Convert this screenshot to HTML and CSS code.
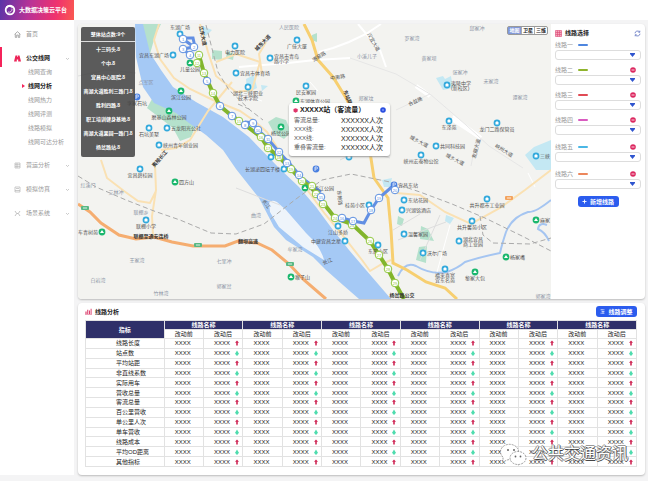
FILE: index.html
```html
<!DOCTYPE html>
<html lang="zh-CN">
<head>
<meta charset="utf-8">
<meta name="viewport" content="width=device-width, initial-scale=1">
<title>大数据决策云平台</title>
<link rel="stylesheet" href="styles.css">
</head>
<body>
<header class="topbar">
  <div class="brand">
    <svg class="brand-logo" viewBox="0 0 12 12" aria-hidden="true"><circle cx="6" cy="6" r="4.3" fill="none" stroke="#fff" stroke-width="1.8"/><path d="M2 2.5C4.500 .5 8 1 9.500 3.500L8 4C6.500 2.500 4 2.500 3 5Z" fill="#fff"/><path d="M8 4.500A3 3 0 0 1 4 8" fill="none" stroke="#fff" stroke-width=".7"/></svg>
    <span>大数据决策云平台</span>
  </div>
</header>
<div class="layout">
  <nav class="sidebar" aria-label="主导航">
    <a class="nav-item" href="#"><svg class="nav-icon" viewBox="0 0 7 7"><path d="M.6 3.300 3.500.7 6.400 3.300M1.300 3V6.400H2.700V4H4.300V6.400H5.700V3" fill="none" stroke="#999" stroke-width=".8"/></svg><span class="nav-text">首页</span></a>
    <a class="nav-item open" href="#"><svg class="nav-icon" viewBox="0 0 7 7"><path d="M1.500.5H3.200V2H3.800V.5H5.500L7 6.500H4.200V4.500H2.800V6.500H0Z" fill="#ed2458"/></svg><span class="nav-text">公交线网</span><svg class="chevron" viewBox="0 0 5 5"><path d="M1 2 2.500 3.500 4 2" /></svg></a>
    <div class="subnav">
      <a href="#">线网查询</a>
      <a class="current" href="#">线网分析</a>
      <a href="#">线网热力</a>
      <a href="#">线网评测</a>
      <a href="#">线路模拟</a>
      <a href="#">线网可达分析</a>
    </div>
    <a class="nav-item" href="#"><svg class="nav-icon" viewBox="0 0 7 7"><path d="M1 1H6V6H1ZM1 2.700H6M1 4.400H6M3 1V6" fill="none" stroke="#aaa" stroke-width=".6"/></svg><span class="nav-text">营运分析</span><svg class="chevron" viewBox="0 0 5 5"><path d="M1 2 2.500 3.500 4 2"/></svg></a>
    <a class="nav-item" href="#"><svg class="nav-icon" viewBox="0 0 7 7"><path d="M1 1H6V6H1ZM1 4.500H6M2 2.500H5" fill="none" stroke="#aaa" stroke-width=".6"/></svg><span class="nav-text">模拟仿真</span><svg class="chevron" viewBox="0 0 5 5"><path d="M1 2 2.500 3.500 4 2"/></svg></a>
    <a class="nav-item" href="#"><svg class="nav-icon" viewBox="0 0 7 7"><path d="M1 1 2.700 3.500 1 6M6 1 4.300 3.500 6 6M2.700 3.500H4.300" fill="none" stroke="#aaa" stroke-width=".7"/></svg><span class="nav-text">场景系统</span><svg class="chevron" viewBox="0 0 5 5"><path d="M1 2 2.500 3.500 4 2"/></svg></a>
  </nav>
  <main class="content">
    <section class="card workspace">
      <div class="map">
        <svg class="map-canvas" id="map" viewBox="78 24 473 275" preserveAspectRatio="xMidYMid slice" role="img" aria-label="线路地图">
          <rect x="78" y="24" width="473" height="275" fill="#f3f3f0"/>
          <g fill="#b5e1cc">
            <path d="M143 24H161L155 36 150 54 143 40Z"/>
            <path d="M152 99 182 114 196 125 191 137 180 141 173 128 147 108Z"/>
            <path d="M268 122 276 117 286 120 291 132 284 139 274 133Z"/>
            <path d="M212 50 222 51 222 60 212 59ZM227 51 234 54 233 60 226 58ZM312 35 317 33V42L311 40ZM398 216 404 219 402 226 397 224ZM421 226 428 229 434 241 420 239ZM419 247 427 246 426 263 416 260Z"/>
          </g>
          <g fill="#c4e8f3">
            <path d="M436 78 443 76 445 79 451 76 453 88 443 90ZM525 155 534 147 551 140V170H536ZM446 215 454 218 450 224 445 221ZM202 26 212 30 205 37 200 33ZM246 79 254 75 257 88 247 93ZM382 180 392 178 390 187 384 187ZM261 85 268 86 262 91ZM142 78 145 76 147 82 143 85Z"/>
          </g>
          <path d="M135 24H143L150 53 161 70 173 87 196 102 223 117 249 137 279 168 299 187 316 207 333 230 349 250 366 270 391 299H359L343 285 326 270 313 257 286 240 274 227 259 198 236 169 223 150 206 135 189 123 176 113 154 103 143 87 136 57Z" fill="#a5c9f5"/>
          <path d="M269 203Q271 199 277 202L286 210 306 233Q321 247 324 260L303 247 279 227 270 212Z" fill="#eef4fa"/>
          <path d="M398 276Q405 261 416 266 431 275 447 272 458 268 465 262 480 257 500 253 502 244 506 232 512 217 528 212 535 213 551 200M547 225Q539 222 538 229 545 232 549 241" fill="none" stroke="#a5c5f1" stroke-width="2"/>
          <g fill="none" stroke="#fff" stroke-width="2">
            <path d="M358 24 368 36 380 50 386 67M319 52 333 48 349 42 366 34 381 24M239 67 288 63 315 60 350 58M453 116 472 130 480 136"/>
            <path d="M452 119 481 138M416 86 430 96" stroke-width="4"/>
            <path d="M528 173 535 187M450 225 445 243 437 272M236 92 262 101M310 82 318 91" stroke-width="1"/>
          </g>
          <g fill="none" stroke="#e6e6e6" stroke-width="1">
            <path d="M396 74 430 94 466 125 489 146 523 168M396 110 430 94M476 140 471 166M350 58 396 74"/>
          </g>
          <g fill="none" stroke="#fae1b3" stroke-width="2">
            <path d="M159 24 154 40 160 59 174 78 190 89 213 100 240 111 253 120 267 132 280 152 295 174 308 191 325 214 340 232 362 260 370 271 382 264 391 260M161 150 176 148 190 140 208 111 218 99 232 82M200 24 208 52 216 76 236 92 252 90 260 62 236 54 216 62M266 42 259 54 262 74M155 165 156 190 152 216 153 236M101 160 107 178 124 191 138 201 150 203 156 191M396 193 420 195 445 212 471 224 500 208 525 190 551 170"/>
          </g>
          <path d="M304 24 312 40 318 60 333 77 346 98 360 125 370 152 374 178 388 198 391 230 393 263 407 270 426 282 445 288 457 299" fill="none" stroke="#f7cf70" stroke-width="3"/>
          <path d="M78 204 90 212 101 223 119 235 136 239 154 237 172 242 193 246 225 246 238 241 257 243 272 250 289 264 304 280 326 299" fill="none" stroke="#f5ad70" stroke-width="3"/>
          <g fill="none" stroke="#aaa" stroke-width="1" stroke-dasharray="5 3">
            <path d="M78 176 96 187 126 200 154 211 180 220 211 233 236 234 264 224 296 199 322 180 351 174 390 182 420 192 452 204 485 218 522 236 551 251M480 216 483 235 493 243 530 244 551 238M206 25 218 72 229 90 250 110 263 120M238 104 251 110"/>
          </g>
          <g fill="none" stroke="#ddd" stroke-width="1"><path d="M78 76 106 70 136 73M236 188 280 205M340 160 360 150 390 158M393 230 420 214M398 240 446 222M420 260 440 215"/></g>
          <path d="M245 122 253 123 258 130 268 139 279 152 290 164 302 178 321 192M183 39 194 47 183 49 190 55M184 38H193L195 47M342 218 353 221 364 223 371 210 379 198 394 185" fill="none" stroke="#628fe3" stroke-width="3"/>
          <path d="M199 55 204 73 213 93 220 106 232 116 245 125 261 137 268 148 279 157 291 169 302 181 312 188 321 200 335 218 352 224 370 241 379 255 388 269 395 283 404 299" fill="none" stroke="#82b52c" stroke-width="4"/>
        </svg>
        <aside class="stations" aria-label="站点列表">
          <h2>整体站点数:9个</h2>
          <ul><li>十三码头.8</li><li>个中.8</li><li>宜昌中心医院.8</li><li>南湖大道胜利三路门.8</li><li>胜利四路.8</li><li>职工培训健身基地.8</li><li>南湖大道果园一路门.8</li><li>杨岔路站.8</li></ul>
        </aside>
        <div class="map-modes"><button class="on" type="button">地图</button><button type="button">卫星</button><button type="button">三维</button></div>
        <div class="tooltip">
          <div class="tooltip-head"><svg class="pin" viewBox="0 0 5 5"><path d="M.5 1 2.500.3 4.700 1V3.500L2.500 4.800.5 3.500Z" fill="#e0356b"/></svg><strong>XXXXX站（客流量）</strong><button class="tooltip-close" type="button" aria-label="关闭"><svg viewBox="0 0 6 6"><circle cx="3" cy="3" r="2.800" fill="#2b50e0"/><path d="M2 2 4 4M4 2 2 4" stroke="#8fa5ff" stroke-width=".6"/></svg></button></div>
          <dl><dt>客流总量:</dt><dd>XXXXXX人次</dd><dt>XXX线:</dt><dd>XXXXXX人次</dd><dt>XXX线:</dt><dd>XXXXXX人次</dd><dt>重叠客流量:</dt><dd>XXXXXX人次</dd></dl>
        </div>
      </div>
      <form class="picker">
        <div class="picker-head"><svg class="head-icon" viewBox="0 0 7 7"><path d="M.5.5H6.500V6.500H.5ZM2.500.5V6.500M4.500.5V6.500M.5 2.500H6.500M.5 4.500H6.500" fill="#f6a8bd" stroke="#dc4a75" stroke-width=".6"/></svg><h2>线路选择</h2><button class="refresh" type="button" aria-label="刷新"><svg viewBox="0 0 7 7"><path d="M1 3.300A2.500 2.500 0 0 1 5.500 2M6 3.700A2.500 2.500 0 0 1 1.500 5M5.800.7V2.200H4.300M1.200 6.300V4.800H2.700" fill="none" stroke="#4a62b8" stroke-width=".7"/></svg></button></div>
        <div id="lines"></div>
        <button class="primary add" type="button"><svg viewBox="0 0 5 5"><path d="M2.500.5V4.500M.5 2.500H4.500" stroke="#fff" stroke-width=".9"/></svg>新增线路</button>
      </form>
    </section>
    <section class="card analysis">
      <div class="analysis-head"><svg class="head-icon" viewBox="0 0 7 7"><path d="M.4 3.500H1.600V6H.4ZM2.200 1.800H3.300V6H2.200ZM4 2.600H5V6H4ZM5.600.8H6.600V6H5.600ZM0 6.300H7V6.800H0Z" fill="#dc4370"/></svg><h2>线路分析</h2><button class="primary" type="button"><svg viewBox="0 0 5 5"><path d="M.5.8H4.500M1.500 2.500H4.500M.5 4.200H4.500M2 .3V1.300M3 2V4.700" stroke="#fff" stroke-width=".6"/></svg>线路调整</button></div>
      <table><thead id="thead"></thead><tbody id="tbody"></tbody></table>
    </section>
  </main>
</div>
<div class="watermark">
  <svg viewBox="0 0 28 24" aria-hidden="true"><g fill="#fff" stroke="#777" stroke-width=".7" stroke-dasharray="2 1"><path d="M3 15A9 7.500 0 1 1 12 17L7 18 3 20Z"/><ellipse cx="18" cy="16" rx="8" ry="6.500"/></g><g fill="#666"><circle cx="8" cy="8" r="1"/><circle cx="14" cy="8" r="1"/><circle cx="15.500" cy="14.500" r=".9"/><circle cx="20.500" cy="14.500" r=".9"/></g></svg>
  <span>公共交通资讯</span>
</div>
<script src="app.js"></script>
</body>
</html>
```
FILE: styles.css
```css
* { box-sizing: border-box; }

body {
  margin: 0;
  min-height: 100vh;
  background: #f4f4f5;
  color: #222;
  font: 6px/8px "Liberation Sans", "Noto Sans CJK SC", sans-serif;
}

h2, ul, dl, dd { margin: 0; padding: 0; }
h2 { font-size: 6px; }
ul { list-style: none; }
a { color: inherit; text-decoration: none; }
svg { display: block; flex: none; }
button { border: 0; padding: 0; background: none; font: inherit; color: inherit; cursor: pointer; }

.topbar { height: 20px; background: #fff; }

.brand {
  display: flex;
  align-items: center;
  gap: 3px;
  width: 74px;
  height: 20px;
  padding-left: 4px;
  background: linear-gradient(100deg, #5a35a8, #b93296 40%, #f0326e 75%, #fa5a50);
  color: #fff;
  font-weight: bold;
}
.brand-logo { width: 12px; height: 12px; }

.layout { display: grid; grid-template-columns: 74px 1fr; }

.sidebar { padding-top: 7px; background: #fff; color: #999; }

.nav-item {
  position: relative;
  display: flex;
  align-items: center;
  gap: 5px;
  height: 14px;
  margin-bottom: 10px;
  padding: 0 4px 0 14px;
}
.nav-icon { width: 7px; height: 7px; }
.nav-text { flex: 1; }
.nav-item.open { margin-bottom: 0; color: #222; font-weight: bold; }
.nav-item.open::before {
  content: "";
  position: absolute;
  left: 0;
  top: -4px;
  width: 2px;
  height: 20px;
  background: #f5235a;
}
.chevron { width: 5px; height: 5px; }
.chevron path { fill: none; stroke: #aaa; stroke-width: .6; }

.subnav { margin-bottom: 9px; }
.subnav a { position: relative; display: block; padding-left: 28px; line-height: 14px; }
.subnav .current { color: #222; font-weight: bold; }
.subnav .current::before {
  content: "";
  position: absolute;
  left: 22px;
  top: 5px;
  border: 2px solid transparent;
  border-left: 3px solid #f5235a;
}

.content { display: grid; gap: 4px; padding: 4px 3px 0 4px; min-width: 0; }

.card { background: #fff; border-radius: 4px; box-shadow: 0 1px 2px #bbb; }

.workspace { display: grid; grid-template-columns: 1fr 94px; overflow: hidden; }

.map { position: relative; }
.map-canvas { width: 100%; aspect-ratio: 473 / 275; }
.map-canvas text { fill: #555; font-size: 5px; text-anchor: middle; }
.map-canvas .place { fill: #8c93a5; }
.map-canvas .road { fill: #333; font-weight: bold; }
.map-canvas .num { font-size: 4px; }

.stations {
  position: absolute;
  left: 3px;
  top: 3px;
  display: flex;
  flex-direction: column;
  width: 54px;
  border-radius: 2px;
  background: rgba(70, 70, 70, .88);
  color: #fff;
  font-size: 5px;
  font-weight: bold;
  text-align: center;
  white-space: nowrap;
}
.stations h2 { border-bottom: 1px solid #ddd; font-size: 5px; line-height: 14px; }
.stations ul { padding-bottom: 3px; }
.stations li { line-height: 14px; }

.map-modes {
  position: absolute;
  top: 2px;
  right: 3px;
  display: flex;
  border: 1px solid #999;
  border-radius: 2px;
  background: #fff;
  font-size: 5px;
  font-weight: bold;
}
.map-modes button { width: 13px; height: 7px; line-height: 7px; }
.map-modes button + button { border-left: 1px solid #aaa; }
.map-modes .on { background: #8198d8; color: #fff; }

.tooltip {
  position: absolute;
  left: 211px;
  top: 79px;
  width: 101px;
  padding: 3px 4px 4px;
  border-radius: 3px;
  background: #fff;
  box-shadow: 0 1px 2px #999;
  white-space: nowrap;
}
.tooltip-head { display: flex; align-items: center; gap: 2px; margin-bottom: 2px; color: #222; font-size: 7px; }
.tooltip-head strong { flex: 1; }
.pin { width: 5px; height: 5px; }
.tooltip-close svg { width: 6px; height: 6px; }
.tooltip dl { display: grid; grid-template-columns: 1fr auto; padding: 0 3px 0 1px; line-height: 9px; }
.tooltip dt { color: #555; }
.tooltip dd { font-size: 7px; }

.picker { display: flex; flex-direction: column; padding: 4px; }
.picker-head, .analysis-head { display: flex; align-items: center; gap: 3px; }
.picker-head h2, .analysis-head h2 { flex: 1; }
.head-icon { width: 7px; height: 7px; }
.picker-head { margin-bottom: 3px; padding-top: 1px; }
.refresh svg { width: 7px; height: 7px; }

.line { margin-bottom: 5px; }
.line:nth-child(n+4) { margin-bottom: 7px; }
.line-head { display: flex; align-items: center; gap: 5px; height: 10px; color: #999; }
.swatch { width: 10px; height: 2px; border-radius: 1px; }
.remove { margin-left: auto; margin-right: 5px; }
.remove svg { width: 6px; height: 6px; }
.select-wrap { position: relative; }
.select-wrap select {
  display: block;
  width: 100%;
  height: 10px;
  border: 1px solid #ddd;
  border-radius: 3px;
  background: #fff;
  appearance: none;
  font: inherit;
}
.select-wrap svg { position: absolute; right: 6px; top: 3px; width: 5px; height: 4px; pointer-events: none; }

.primary {
  display: flex;
  align-items: center;
  justify-content: center;
  gap: 3px;
  width: 41px;
  height: 11px;
  border-radius: 3px;
  background: #2b5cee;
  color: #fff;
  font-weight: bold;
}
.primary svg { width: 5px; height: 5px; }
.add { align-self: center; }

.analysis { padding: 3px 8px 8px 7px; }
.analysis-head { margin-bottom: 3px; }

table { width: 100%; height: 147px; border-collapse: collapse; table-layout: fixed; }
th, td {
  padding: 0 0 0 10px;
  border: 1px solid #e2e2e2;
  line-height: 8px;
  font-weight: normal;
  text-align: left;
  white-space: nowrap;
}
tbody th { padding-left: 30px; }
.group, .metric { padding: 0; background: #2f3069; color: #fff; font-weight: bold; text-align: center; }
.metric { width: 14.28%; }
.cell { display: flex; align-items: center; gap: 5px; }
.cell svg { width: 4px; height: 6px; }

.watermark {
  position: absolute;
  left: 500px;
  top: 442px;
  display: flex;
  align-items: center;
  gap: 4px;
  color: #fff;
  font-size: 16px;
  line-height: 24px;
  text-shadow: 1px 0 0 #555, -1px 0 0 #999, 0 1px 0 #444, 0 -1px 0 #999;
  pointer-events: none;
}
.watermark svg { width: 28px; height: 24px; }
```
FILE: app.js
```js
const rows = ["线路长度", "站点数", "平均站距", "非直线系数", "实际用车", "营收总量", "客流总量", "百公里营收", "单公里人次", "单车营收", "线路成本", "平均OD距离", "其他指标"];
const groups = 6;
const arrow = up => up
  ? '<svg viewBox="0 0 4 6" aria-label="上升"><path d="M2 .5 4 2.800H2.800V5.500H1.200V2.800H0Z" fill="#cf2755"/></svg>'
  : '<svg viewBox="0 0 4 6" aria-label="下降"><path d="M2 .5 3.500 3H4L2.900 5.500H1.100L0 3H.5Z" fill="#4fdcae"/></svg>';

document.getElementById("thead").innerHTML =
  '<tr><th class="metric" rowspan="2" scope="col">指标</th>' +
  '<th class="group" colspan="2" scope="colgroup">线路名称</th>'.repeat(groups) + "</tr><tr>" +
  '<th scope="col">改动前</th><th scope="col">改动后</th>'.repeat(groups) + "</tr>";
document.getElementById("tbody").innerHTML = rows.map((name, i) =>
  `<tr><th scope="row">${name}</th>` +
  `<td>XXXX</td><td><div class="cell">XXXX${arrow(i % 2 === 0)}</div></td>`.repeat(groups) + "</tr>").join("");

const lines = [["一", "#4e86df"], ["二", "#8fb42c"], ["三", "#e04a55"], ["四", "#d95bc0"], ["五", "#4bb7e5"], ["六", "#ec875c"]];
document.getElementById("lines").innerHTML = lines.map(([n, color], i) =>
  `<div class="line"><div class="line-head"><label for="line${i}">线路${n}</label><span class="swatch" style="background:${color}"></span>` +
  (i ? `<button class="remove" type="button" aria-label="删除线路${n}"><svg viewBox="0 0 6 6"><circle cx="3" cy="3" r="2.800" fill="#dc2860"/><path d="M1.500 3H4.500" stroke="#fff" stroke-width=".8"/></svg></button>` : "") +
  `</div><div class="select-wrap"><select id="line${i}"></select><svg viewBox="0 0 5 4"><path d="M0 0H5V1L2.500 4 0 1Z" fill="#2f55cf"/></svg></div></div>`).join("");

// Points of interest: x, y, colour key, label, label side (b = below, r = right, l = left, t = top)
const pois = [
  [180, 34, "b", "东湖广场", "t"], [173, 55, "b", "宜昌东湖广场", "l"], [190, 63, "g", "儿童公园", "b"],
  [181, 91, "g", "滨江公园", "b"], [169, 111, "g", "磨基山森林公园", "b"], [137, 97, "p", "李家石坑", "b"],
  [149, 128, "b", "石坑美墅", "b"], [167, 128, "b", "五龙阳光公社", "r"], [159, 145, "b", "峡州青年创业园", "r"],
  [140, 169, "b", "宜昌碧桂园", "b"], [175, 182, "g", "四方山", "r"], [146, 220, "b", "联棚小学", "b"],
  [102, 232, "g", "车青树苑", "l"], [297, 40, "b", "广佳大厦", "b"], [270, 58, "b", "宜昌市青岛|路小学", "r"],
  [235, 46, "b", "电力医院", "b"], [236, 73, "b", "宜昌市体育场", "r"], [248, 87, "b", "湖北三峡职业|技术学院", "b"],
  [306, 86, "b", "民安家园", "b"], [296, 101, "g", "东湖体育公园", "r"], [281, 127, "g", "杨岔公园", "b"],
  [271, 157, "b", "", "b"], [284, 169, "b", "长湖泌四坛子楼", "l"], [316, 169, "p", "", "b"], [305, 188, "g", "市沿江公园", "r"],
  [349, 157, "b", "", "b"], [369, 205, "b", "桂苑小区", "l"], [338, 226, "b", "江山多娇", "b"], [345, 241, "b", "中建宜昌之星", "l"],
  [378, 245, "b", "东辰小区", "b"], [291, 277, "g", "猴子山", "r"], [447, 85, "b", "夷陵中学|(新校区)", "r"],
  [449, 121, "b", "东泽苑", "b"], [497, 123, "b", "龙门二路保管员", "b"], [436, 146, "b", "共同科技园", "r"],
  [421, 155, "b", "峡州宏泰物公馆", "b"], [536, 156, "b", "三峡", "r"], [394, 185, "p", "宜昌东站", "r"],
  [404, 200, "b", "东站花园", "r"], [402, 210, "b", "兴湖铭酒店", "r"], [404, 234, "b", "温馨家园", "r"],
  [487, 199, "b", "共升都市工业园", "b"], [472, 221, "b", "共升馨苑小区", "b"], [459, 241, "b", "湖北宜昌|商工业园", "r"],
  [423, 253, "b", "沃尔广场", "r"], [445, 269, "b", "福来喜宴|宜东名苑", "b"], [475, 272, "g", "黎家大包", "b"],
  [506, 257, "g", "杨家嘴", "r"], [536, 220, "g", "麻家", "r"]
];
const poiColors = { b: "#32a9dc", g: "#1bb76e", p: "#497fe0" };
const text = (x, y, s, cls = "", angle = 0, anchor = "middle") =>
  `<text class="${cls}" x="${x}" y="${y}" style="text-anchor:${anchor}"${angle ? ` transform="rotate(${angle} ${x} ${y})"` : ""}>${s}</text>`;
let art = "";
for (const [x, y, c, label, side] of pois) {
  art += `<circle cx="${x}" cy="${y}" r="3.400" fill="${poiColors[c]}"/>`;
  art += c === "g" ? `<path d="M${x} ${y - 2}l2 3h-4ZM${x - 1.5} ${y + 1.5}h3" fill="#fff"/>`
    : c === "p" ? `<path d="M${x - 1} ${y + 2}v-4h1.500a1 1 0 0 1 0 2h-1.500" fill="none" stroke="#fff" stroke-width=".7"/>`
    : `<path d="M${x - 1.5} ${y + 1.5}v-2l1.500 -1.500 1.500 1.500v2Z" fill="#fff"/>`;
  const parts = label.split("|");
  parts.forEach((part, i) => {
    const drop = i * 5;
    const lift = parts.length > 1 ? 0 : 2;
    if (side === "r") art += text(x + 4, y + lift + drop, part, "", 0, "start");
    else if (side === "l") art += text(x - 4, y + 2, part, "", 0, "end");
    else art += text(x, side === "t" ? y - 5 : y + 8 + drop, part);
  });
}

const places = [
  [477, 30, "邱家冲"], [412, 40, "罗家湾"], [429, 60, "黄家坝"], [460, 74, "张家冲"], [491, 83, "宋家湾"], [520, 99, "谭家湾"],
  [367, 58, "小溪儿子"], [366, 100, "郑家坟"], [146, 84, "点军区"], [88, 187, "红溪门"], [116, 194, "艾林冲"], [141, 214, "联棚乡"],
  [137, 262, "王家湾"], [98, 282, "白岩湾"], [161, 295, "竹林湾"], [224, 263, "七里冲"], [224, 288, "郭家岔"], [256, 217, "曲湾"],
  [295, 251, "牟家湾"], [543, 298, "郭家湾"], [289, 29, "人民医院"]
];
const roads = [
  [248, 243, "翻坝高速", 0], [151, 238, "联棚至通安连桥", 0], [161, 160, "夷陵长江", -48], [264, 44, "城东大道", -46],
  [201, 36, "江东大道", 78], [346, 98, "东站路", 68], [402, 297, "杨岔路公交", 0]
];
const minor = [
  [320, 58, "港窑路", -32], [338, 79, "中南路", -10], [372, 43, "汉宜大道", 60], [416, 103, "合益路", -25], [418, 143, "城乡大道", 28],
  [454, 161, "城乡大道", 28], [478, 149, "发展大道", -75], [503, 152, "峡州大道", 32], [338, 198, "东艳路", 85], [265, 205, "长江", 55],
  [328, 263, "长江", -20]
];
places.forEach(([x, y, s]) => art += text(x, y, s, "place"));
roads.forEach(([x, y, s, a]) => art += text(x, y, s, "road", a));
minor.forEach(([x, y, s, a]) => art += text(x, y, s, "", a));
[[81, 206, "#58b884"], [194, 243, "#58b884"], [286, 262, "#58b884"], [505, 196, "#f3a35e"]].forEach(([x, y, c]) =>
  art += `<rect x="${x}" y="${y}" width="8" height="4" rx="1" fill="${c}"/><path d="M${x + 2} ${y + 2}h4" stroke="#fff" stroke-width=".8"/>`);

// Numbered stops along both routes
const green = [[199, 55], [197, 63], [204, 73], [213, 93], [239, 121], [261, 137], [268, 148], [279, 157], [291, 169], [302, 181], [312, 186], [316, 194], [323, 204], [335, 218], [352, 225], [370, 241], [379, 255], [388, 269], [395, 283]];
const blue = [[183, 39], [194, 47], [183, 49], [190, 55], [207, 81], [220, 106], [232, 116], [245, 125], [253, 123], [258, 130], [268, 139], [279, 152], [287, 163], [299, 175], [321, 197], [342, 218], [353, 221], [371, 210], [379, 198], [395, 190]];
const stops = (pts, color, start) => pts.forEach(([x, y], i) =>
  art += `<circle cx="${x}" cy="${y}" r="3.800" fill="#fff" stroke="${color}" stroke-width="1"/><text class="num" x="${x}" y="${y + 1.5}" style="fill:${color}">${start + i}</text>`);
stops(green, "#8fc73d", 11);
stops(blue, "#5c8fe0", 1);
document.getElementById("map").insertAdjacentHTML("beforeend", art);
```
